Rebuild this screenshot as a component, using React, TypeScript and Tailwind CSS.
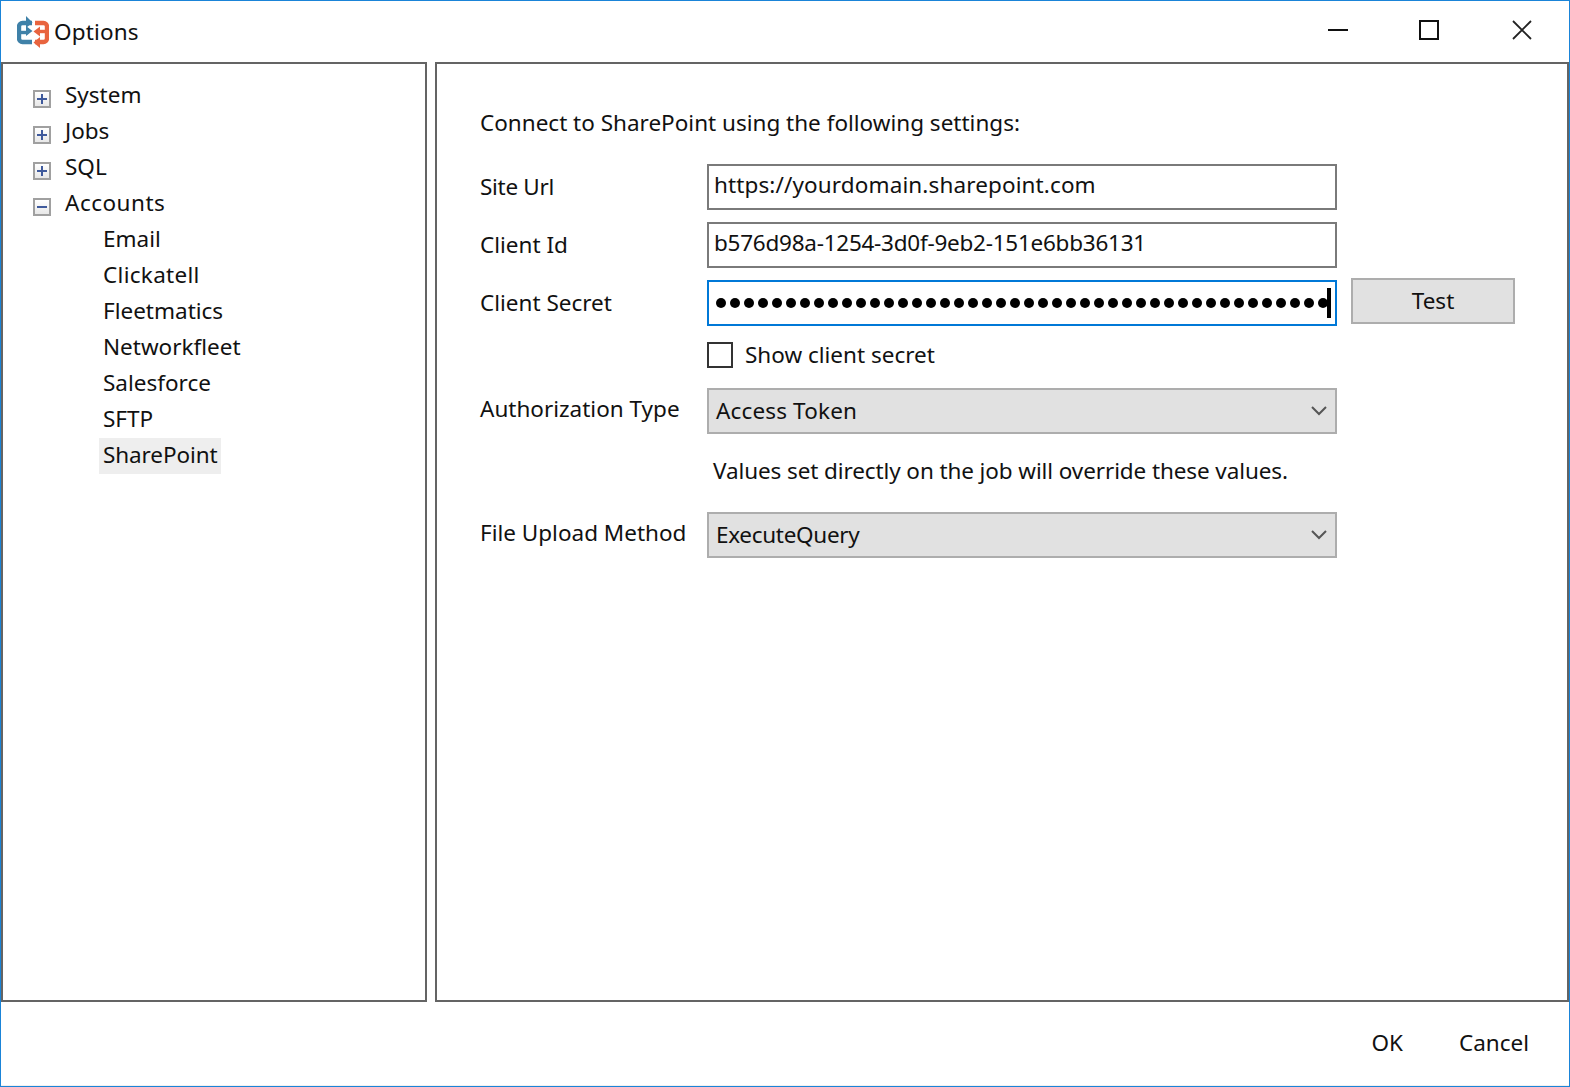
const font = { fontFamily: '"Noto Sans", "Open Sans", sans-serif' };

function AppIcon() {
  return (
    <svg width="32" height="32" viewBox="0 0 32 32" className="shrink-0">
      <path d="M15 7H5.5a3.5 3.5 0 0 0-3.5 3.5v12a3.5 3.5 0 0 0 3.5 3.5H15" fill="none" stroke="#3f81a8" strokeWidth="4.4" />
      <path d="M2 16.5h9" stroke="#3f81a8" strokeWidth="3.4" />
      <path d="M9 0l6.5 6.5L9 12z" fill="#3f81a8" />
      <path d="M9 10l6.5 5L9 20z" fill="#3f81a8" />
      <path d="M18 7h8.5a3.5 3.5 0 0 1 3.5 3.5v12a3.5 3.5 0 0 1-3.5 3.5H18" fill="none" stroke="#e8643f" strokeWidth="4.4" />
      <path d="M21 15.5h9" stroke="#e8643f" strokeWidth="3.4" />
      <path d="M23 10.5l-6.5 5 6.5 5z" fill="#e8643f" />
      <path d="M23 21l-6.5 5.5L23 32z" fill="#e8643f" />
    </svg>
  );
}

function Expander({ open }: { open?: boolean }) {
  return (
    <span className="flex h-[18px] w-[18px] shrink-0 items-center justify-center border-2 border-[#a0a0a0] bg-gradient-to-b from-white to-[#e8e8e8]">
      <svg width="10" height="10" viewBox="0 0 10 10">
        <path d={open ? "M0 5h10" : "M0 5h10M5 0v10"} stroke="#3f5a9c" strokeWidth="2" />
      </svg>
    </span>
  );
}

function TopNode({ label, open, className = "" }: { label: string; open?: boolean; className?: string }) {
  return (
    <div className="flex h-9 items-center">
      <div className="ml-[30px] mt-[6px]">
        <Expander open={open} />
      </div>
      <span className={`ml-[14px] pb-[2px] text-[#111] ${className}`}>{label}</span>
    </div>
  );
}

function ChildNode({ label, selected, className = "" }: { label: string; selected?: boolean; className?: string }) {
  return (
    <div className="flex h-9 items-center pl-[96px]">
      <span className={`h-9 px-1 leading-[34px] text-[#111] ${selected ? "bg-[#eeeeee]" : ""} ${className}`}>{label}</span>
    </div>
  );
}

function Label({ children, raised, className = "" }: { children: string; raised?: boolean; className?: string }) {
  return <div className={`w-[227px] shrink-0 text-[#111] ${raised ? "pb-[4px]" : ""} ${className}`}>{children}</div>;
}

function Chevron() {
  return (
    <svg width="16" height="10" viewBox="0 0 16 10">
      <path d="M1 1l7 7 7-7" fill="none" stroke="#555" strokeWidth="2" />
    </svg>
  );
}

function Select({ value, className = "" }: { value: string; className?: string }) {
  return (
    <div className="flex h-[46px] w-[630px] items-center justify-between border-2 border-[#adadad] bg-[#e1e1e1] pl-[7px] pr-[8px]">
      <span className={`text-[#111] ${className}`}>{value}</span>
      <Chevron />
    </div>
  );
}

export default function App() {
  return (
    <div
      style={font}
      className="flex h-[1087px] w-[1570px] flex-col overflow-hidden border border-[#1a84d8] bg-white text-[22.5px] leading-8"
    >
      <div className="flex h-[61px] shrink-0 items-center">
        <div className="ml-[16px] flex items-center gap-[5px]">
          <AppIcon />
          <span className="tracking-[0.15px] text-[#111]">Options</span>
        </div>
        <div className="mb-[3px] ml-auto flex items-center pr-[37px]">
          <svg width="20" height="20" viewBox="0 0 20 20" className="mr-[71px]">
            <path d="M0 10h20" stroke="#111" strokeWidth="2" />
          </svg>
          <svg width="20" height="20" viewBox="0 0 20 20" className="mr-[73px]">
            <rect x="1" y="1" width="18" height="18" fill="none" stroke="#111" strokeWidth="2" />
          </svg>
          <svg width="20" height="20" viewBox="0 0 20 20">
            <path d="M1 1l18 18M19 1L1 19" stroke="#222" strokeWidth="1.8" />
          </svg>
        </div>
      </div>

      <div className="flex h-[940px] shrink-0 gap-[8px]">
        <div className="w-[426px] shrink-0 border-2 border-[#646464] pt-[14px]">
          <TopNode label="System" />
          <TopNode label="Jobs" />
          <TopNode label="SQL" />
          <TopNode label="Accounts" open className="tracking-[0.5px]" />
          <ChildNode label="Email" />
          <ChildNode label="Clickatell" className="tracking-[0.3px]" />
          <ChildNode label="Fleetmatics" />
          <ChildNode label="Networkfleet" />
          <ChildNode label="Salesforce" />
          <ChildNode label="SFTP" />
          <ChildNode label="SharePoint" selected className="tracking-[-0.1px]" />
        </div>

        <div className="min-w-0 flex-1 border-2 border-[#646464] pl-[43px] pt-[43px]">
          <div className="text-[#111]">Connect to SharePoint using the following settings:</div>

          <div className="mt-[25px] flex h-[46px] items-center">
            <Label className="tracking-[-0.3px]">Site Url</Label>
            <div className="flex h-[46px] w-[630px] items-center border-2 border-[#7a7a7a] pb-[4px] pl-[5px] tracking-[0.12px] text-[#111]">
              https://yourdomain.sharepoint.com
            </div>
          </div>

          <div className="mt-[12px] flex h-[46px] items-center">
            <Label>Client Id</Label>
            <div className="flex h-[46px] w-[630px] items-center border-2 border-[#7a7a7a] pb-[4px] pl-[5px] tracking-[-0.25px] text-[#111]">
              b576d98a-1254-3d0f-9eb2-151e6bb36131
            </div>
          </div>

          <div className="mt-[12px] flex h-[46px] items-center">
            <Label>Client Secret</Label>
            <div className="flex h-[46px] w-[630px] items-center border-2 border-[#0078d7] pl-[7px]">
              <div className="flex gap-[4px]">
                {Array.from({ length: 44 }).map((_, i) => (
                  <span key={i} className="h-[10px] w-[10px] shrink-0 rounded-full bg-black" />
                ))}
              </div>
              <span className="ml-[-1px] h-[30px] w-[4px] bg-black" />
            </div>
            <div className="mb-[4px] ml-[14px] flex h-[46px] w-[164px] items-center justify-center border-2 border-[#adadad] bg-[#e1e1e1] text-[#111]">
              Test
            </div>
          </div>

          <div className="ml-[227px] mt-[16px] flex h-[26px] items-center gap-[12px]">
            <span className="h-[26px] w-[26px] shrink-0 border-2 border-[#333] bg-white" />
            <span className="text-[#111]">Show client secret</span>
          </div>

          <div className="mt-[20px] flex h-[46px] items-center">
            <Label raised>Authorization Type</Label>
            <Select value="Access Token" className="tracking-[0.15px]" />
          </div>

          <div className="ml-[233px] mt-[21px] tracking-[-0.1px] text-[#111]">Values set directly on the job will override these values.</div>

          <div className="mt-[25px] flex h-[46px] items-center">
            <Label raised>File Upload Method</Label>
            <Select value="ExecuteQuery" className="tracking-[-0.3px]" />
          </div>
        </div>
      </div>

      <div className="flex flex-1 items-center justify-end border-b border-[#f0f0f0] pb-[2px] pr-[40px]">
        <span className="text-[#111]">OK</span>
        <span className="ml-[56px] text-[#111]">Cancel</span>
      </div>
    </div>
  );
}
